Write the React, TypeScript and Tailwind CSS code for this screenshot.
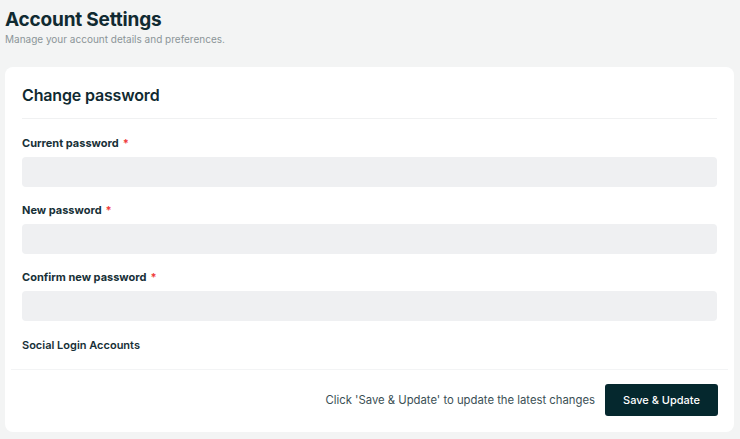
import type { ReactNode } from "react";

function Field({ label, required }: { label: string; required?: boolean }) {
  return (
    <div className="flex flex-col gap-[7px]">
      <label className="text-[11px] font-bold leading-[14px] text-[#173037]">
        {label}
        {required && <span className="ml-1 text-[#ef3b3b]">*</span>}
      </label>
      <input
        type="password"
        className="h-[30px] w-full rounded-[4px] bg-[#eff0f2] px-3 text-[12px] outline-none"
      />
    </div>
  );
}

function Card({ children }: { children: ReactNode }) {
  return <div className="flex flex-col rounded-lg bg-white">{children}</div>;
}

export default function App() {
  return (
    <div className="min-h-screen bg-[#f3f4f4] px-[5px] pt-[7px] font-['Inter',sans-serif] text-[#102a31]">
      <h1 className="text-[19px] font-bold leading-[25px] tracking-[-0.01em]">Account Settings</h1>
      <p className="text-[10px] leading-[14px] text-[#8b9598]">
        Manage your account details and preferences.
      </p>

      <div className="mt-[21px] w-[729px]">
        <Card>
          {/* header */}
          <div className="mx-[17px] border-b border-[#f0f1f2] pb-[11px] pt-[16px]">
            <h2 className="text-[16px] font-semibold leading-[24px] tracking-[-0.01em]">Change password</h2>
          </div>

          {/* fields */}
          <div className="flex flex-col gap-[16px] px-[17px] pt-[17px]">
            <Field label="Current password" required />
            <Field label="New password" required />
            <Field label="Confirm new password" required />
            <div className="pt-[1px] text-[11px] font-semibold leading-[14px] text-[#173037]">
              Social Login Accounts
            </div>
          </div>

          {/* footer */}
          <div className="mx-[6px] mt-[17px] flex items-center justify-end gap-[10px] border-t border-[#f3f4f5] pb-[16px] pt-[14px] pr-[10px]">
            <span className="text-[11.3px] text-[#3b4f55]">
              Click 'Save &amp; Update' to update the latest changes
            </span>
            <button className="h-[32px] w-[113px] rounded-[3px] bg-[#05282e] text-[11px] font-medium text-white">
              Save &amp; Update
            </button>
          </div>
        </Card>
      </div>
    </div>
  );
}
